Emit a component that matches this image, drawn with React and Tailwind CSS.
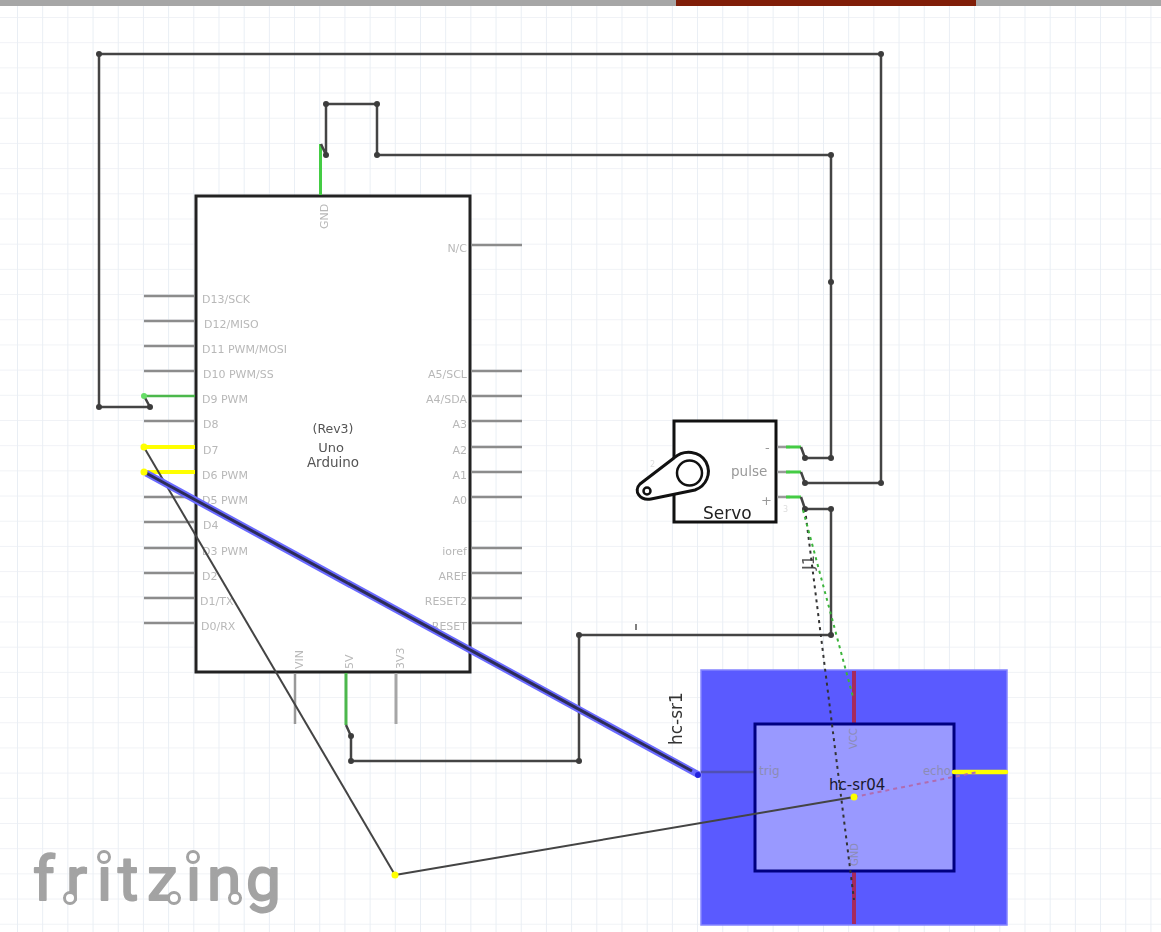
const leftPins = [
  { y: 296, label: "D13/SCK", x: 202 },
  { y: 321, label: "D12/MISO", x: 204 },
  { y: 346, label: "D11 PWM/MOSI", x: 202 },
  { y: 371, label: "D10 PWM/SS", x: 203 },
  { y: 396, label: "D9 PWM", x: 202, color: "green" },
  { y: 421, label: "D8", x: 203 },
  { y: 447, label: "D7", x: 203, color: "yellow" },
  { y: 472, label: "D6 PWM", x: 202, color: "yellow" },
  { y: 497, label: "D5 PWM", x: 202 },
  { y: 522, label: "D4", x: 203 },
  { y: 548, label: "D3 PWM", x: 202 },
  { y: 573, label: "D2", x: 202 },
  { y: 598, label: "D1/TX", x: 200 },
  { y: 623, label: "D0/RX", x: 201 },
];

const rightPins = [
  { y: 245, label: "N/C" },
  { y: 371, label: "A5/SCL" },
  { y: 396, label: "A4/SDA" },
  { y: 421, label: "A3" },
  { y: 447, label: "A2" },
  { y: 472, label: "A1" },
  { y: 497, label: "A0" },
  { y: 548, label: "ioref" },
  { y: 573, label: "AREF" },
  { y: 598, label: "RESET2" },
  { y: 623, label: "RESET" },
];

const wires = [
  "M99 54H881V483H805L801 472",
  "M99 54V407H150L144 396",
  "M321 144L326 155V104H377V155H831V458H805L801 447",
  "M801 497L805 509H831V635H579V761H351V736L346 725",
];

const junctions = [
  [99, 54], [881, 54], [99, 407], [150, 407], [326, 155], [326, 104], [377, 104], [377, 155],
  [831, 155], [831, 282], [831, 458], [805, 458], [881, 483], [805, 483], [805, 509], [831, 509],
  [831, 635], [579, 635], [579, 761], [351, 761], [351, 736],
];

function Arduino() {
  return (
    <g className="font-['DejaVu_Sans',sans-serif]">
      <rect x="196" y="196" width="274" height="476" fill="#fff" stroke="#222" strokeWidth="3" />
      {leftPins.map((p) => (
        <g key={p.label}>
          <line
            x1={p.color === "yellow" ? 142 : 144}
            y1={p.y}
            x2="195"
            y2={p.y}
            stroke={p.color === "yellow" ? "#ffff00" : p.color === "green" ? "#4cb84c" : "#8c8c8c"}
            strokeWidth={p.color === "yellow" ? 4 : 2.5}
          />
          <text x={p.x} y={p.y + 7} fontSize="11" fill="#b8b8b8">{p.label}</text>
        </g>
      ))}
      {rightPins.map((p) => (
        <g key={p.label}>
          <line x1="471" y1={p.y} x2="522" y2={p.y} stroke="#8c8c8c" strokeWidth="2.5" />
          <text x="467" y={p.y + 7} fontSize="11" fill="#b8b8b8" textAnchor="end">{p.label}</text>
        </g>
      ))}
      <line x1="320.5" y1="144" x2="320.5" y2="195" stroke="#44cc44" strokeWidth="3" />
      <line x1="295" y1="673" x2="295" y2="724" stroke="#999" strokeWidth="2.5" />
      <line x1="346" y1="673" x2="346" y2="725" stroke="#4cb84c" strokeWidth="3" />
      <line x1="396" y1="673" x2="396" y2="724" stroke="#a6a6a6" strokeWidth="3" />
      <text transform="translate(328 229) rotate(-90)" fontSize="11" fill="#b8b8b8">GND</text>
      <text transform="translate(303 669) rotate(-90)" fontSize="11" fill="#b8b8b8">VIN</text>
      <text transform="translate(353 669) rotate(-90)" fontSize="11" fill="#b8b8b8">5V</text>
      <text transform="translate(404 669) rotate(-90)" fontSize="11" fill="#b8b8b8">3V3</text>
      <text x="333" y="433" fontSize="12.5" fill="#555" textAnchor="middle">(Rev3)</text>
      <text x="331" y="452" fontSize="13" fill="#555" textAnchor="middle">Uno</text>
      <text x="333" y="467" fontSize="13.5" fill="#555" textAnchor="middle">Arduino</text>
    </g>
  );
}

function Servo() {
  return (
    <g className="font-['DejaVu_Sans',sans-serif]">
      <rect x="674" y="421" width="102" height="101" fill="#fff" stroke="#111" strokeWidth="3" />
      {[447, 472, 497].map((y) => (
        <g key={y}>
          <line x1="777" y1={y} x2="790" y2={y} stroke="#999" strokeWidth="2.5" />
          <line x1="786" y1={y} x2="801" y2={y} stroke="#44cc44" strokeWidth="3" />
        </g>
      ))}
      <path
        d="M640 484L674 458C684 449 700 451 706 462C712 474 706 486 695 490L651 499C640 501 633 491 640 484Z"
        fill="#fff"
        stroke="#111"
        strokeWidth="3"
        strokeLinejoin="round"
      />
      <circle cx="689.5" cy="473" r="12.5" fill="#fff" stroke="#111" strokeWidth="2.5" />
      <circle cx="647" cy="491" r="3.5" fill="#fff" stroke="#111" strokeWidth="2.5" />
      <text x="765" y="452" fontSize="13" fill="#999">-</text>
      <text x="731" y="476" fontSize="13.5" fill="#999">pulse</text>
      <text x="761" y="505" fontSize="13" fill="#999">+</text>
      <text x="703" y="519" fontSize="17" fill="#222">Servo</text>
      <text x="650" y="467" fontSize="8" fill="#ddd">2</text>
      <text x="783" y="512" fontSize="8" fill="#ddd">3</text>
      <text transform="translate(814 570) rotate(-90)" fontSize="16" fill="#555">J1</text>
    </g>
  );
}

function Sensor() {
  return (
    <g className="font-['DejaVu_Sans',sans-serif]">
      <rect x="701" y="670" width="306" height="255" fill="#5555ff" stroke="#8080ff" strokeWidth="1.5" opacity="0.97" />
      <line x1="701" y1="772" x2="755" y2="772" stroke="#5050b4" strokeWidth="2.5" />
      <line x1="854" y1="671" x2="854" y2="723" stroke="#a52a5e" strokeWidth="4" />
      <line x1="854" y1="872" x2="854" y2="924" stroke="#a52a5e" strokeWidth="4" />
      <rect x="755" y="724" width="199" height="147" fill="#9999ff" stroke="#000080" strokeWidth="3" />
      <line x1="954" y1="772" x2="1006" y2="772" stroke="#ffff00" strokeWidth="4.5" strokeLinecap="round" />
      <text x="759" y="775" fontSize="12" fill="#8c8cb4">trig</text>
      <text x="923" y="775" fontSize="11.5" fill="#8c8cb4">echo</text>
      <text transform="translate(857 749) rotate(-90)" fontSize="10" fill="#8c8cb4">VCC</text>
      <text transform="translate(858 866) rotate(-90)" fontSize="10" fill="#8c8cb4">GND</text>
      <text x="829" y="790" fontSize="15" fill="#1a1a2e">hc-sr04</text>
      <text transform="translate(682 745) rotate(-90)" fontSize="17" fill="#333">hc-sr1</text>
    </g>
  );
}

function FritzingLogo() {
  return (
    <g>
      <text
        x="33 66 97 118 147 186 207 246"
        y="900"
        fontSize="62"
        fill="#a3a3a3"
        stroke="#a3a3a3"
        strokeWidth="2"
        strokeLinejoin="round"
        className="font-['Roboto',sans-serif]"
      >
        fritzing
      </text>
      {[[70, 898], [104, 857], [174, 898], [193, 857], [235, 898]].map(([cx, cy]) => (
        <circle key={cx} cx={cx} cy={cy} r="5.5" fill="#fff" stroke="#a3a3a3" strokeWidth="3" />
      ))}
    </g>
  );
}

export default function App() {
  return (
    <div className="flex h-[932px] w-[1161px] flex-col overflow-hidden bg-white">
      <div className="flex h-[6px] shrink-0">
        <div className="w-[676px] bg-[#a6a6a6]" />
        <div className="w-[300px] bg-[#801e08]" />
        <div className="flex-1 bg-[#a6a6a6]" />
      </div>
      <div className="flex-1 bg-[linear-gradient(to_right,#e9eef4_1px,transparent_1px),linear-gradient(to_bottom,#f0f2f6_1px,transparent_1px)] bg-size-[25.2px_25.2px] bg-position-[17px_11px]">
        <svg viewBox="0 6 1161 926" width="1161" height="926" className="block blur-[0.5px]">
          <FritzingLogo />
          <Arduino />
          <Servo />
          <Sensor />

          {wires.map((d) => (
            <path key={d} d={d} fill="none" stroke="#444" strokeWidth="2.5" />
          ))}
          {junctions.map(([cx, cy]) => (
            <circle key={`${cx}-${cy}`} cx={cx} cy={cy} r="3" fill="#3c3c3c" />
          ))}

          {/* ratsnest lines */}
          <line x1="805" y1="509" x2="854" y2="900" stroke="#333" strokeWidth="2" strokeDasharray="3 4" />
          <line x1="803" y1="510" x2="853" y2="697" stroke="#3cb43c" strokeWidth="2" strokeDasharray="3 4" />
          <line x1="854" y1="797" x2="978" y2="772" stroke="#b06cb0" strokeWidth="2" strokeDasharray="4 4" />

          {/* routed wires over the parts */}
          <line x1="145" y1="449" x2="395" y2="875" stroke="#444" strokeWidth="2" />
          <line x1="395" y1="875" x2="854" y2="797" stroke="#444" strokeWidth="2" />
          <line x1="146" y1="473" x2="699" y2="775" stroke="#6a6aff" strokeWidth="7" />
          <line x1="146" y1="473" x2="692" y2="771" stroke="#2c2c58" strokeWidth="3" />
          <circle cx="698" cy="775" r="3" fill="#2222dd" />
          <line x1="636" y1="624" x2="636" y2="630" stroke="#555" strokeWidth="1.5" />

          <circle cx="144" cy="396" r="3" fill="#66dd66" />
          <circle cx="144" cy="447" r="3.5" fill="#ffff00" />
          <circle cx="144" cy="472" r="3.5" fill="#ffff00" />
          <circle cx="395" cy="875" r="3.5" fill="#ffff00" />
          <circle cx="854" cy="797" r="3.5" fill="#ffff00" />
        </svg>
      </div>
    </div>
  );
}
